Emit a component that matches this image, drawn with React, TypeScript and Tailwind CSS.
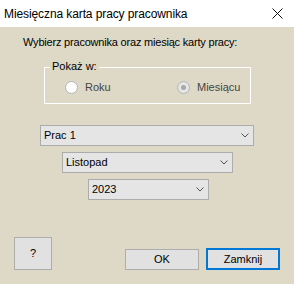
import React from "react";

const font = { fontFamily: '"Liberation Sans", Arial, sans-serif' };

function Chevron() {
  return (
    <svg width="8" height="5" viewBox="0 0 8 5" className="shrink-0">
      <path d="M0.5 0.5 L4 4 L7.5 0.5" fill="none" stroke="#555" strokeWidth="1" />
    </svg>
  );
}

function Combo({ value, width, left }: { value: string; width: string; left: string }) {
  return (
    <div
      className={`${width} ${left} flex h-[21px] items-center justify-between border border-[#acacac] bg-[#e5e5e5] pl-[3px] pr-[4px] text-[11px] text-black`}
    >
      <span className="leading-[13px]">{value}</span>
      <Chevron />
    </div>
  );
}

function Radio({ label, checked }: { label: string; checked?: boolean }) {
  return (
    <div className="flex items-center gap-[7px]">
      <div
        className={`flex h-[13px] w-[13px] items-center justify-center rounded-full border border-[#b4b4b4] ${
          checked ? "bg-[#e6e6e6]" : "bg-white"
        }`}
      >
        {checked ? <div className="h-[5px] w-[5px] rounded-full bg-[#a8a8a8]" /> : null}
      </div>
      <span className="text-[11px] leading-[13px] text-[#444]">{label}</span>
    </div>
  );
}

export default function App() {
  return (
    <div className="flex h-[284px] w-[294px] flex-col bg-[#ded9c6]" style={font}>
      {/* title bar */}
      <div className="flex h-[27px] items-center justify-between bg-white pl-[4px] pr-[11px]">
        <span className="text-[12px] leading-[14px] tracking-[-0.1px] text-black">
          Miesięczna karta pracy pracownika
        </span>
        <svg width="11" height="11" viewBox="0 0 11 11">
          <path d="M0.5 0.5 L10.5 10.5 M10.5 0.5 L0.5 10.5" stroke="#111" strokeWidth="1" />
        </svg>
      </div>

      <div className="flex flex-1 flex-col">
        <div className="mt-[9px] pl-[23px] text-[11px] leading-[13px] tracking-[-0.2px] text-black">
          Wybierz pracownika oraz miesiąc karty pracy:
        </div>

        {/* group box */}
        <div className="relative ml-[44px] mt-[18px] h-[37px] w-[207px] border border-white">
          <span className="absolute left-[5px] top-[-8px] bg-[#ded9c6] px-[2px] text-[11px] leading-[13px] text-black">
            Pokaż w:
          </span>
          <div className="flex pl-[20px] pt-[13px]">
            <div className="w-[112px]">
              <Radio label="Roku" />
            </div>
            <Radio label="Miesiącu" checked />
          </div>
        </div>

        <div className="mt-[21px] flex flex-col gap-[6px]">
          <Combo value="Prac 1" width="w-[214px]" left="ml-[40px]" />
          <Combo value="Listopad" width="w-[171px]" left="ml-[62px]" />
          <Combo value="2023" width="w-[121px]" left="ml-[88px]" />
        </div>

        {/* buttons */}
        <div className="mt-auto flex items-end px-[14px] pb-[14px]">
          <button className="h-[33px] w-[38px] border border-[#adadad] bg-[#e1e1e1] text-[11px] text-black">
            ?
          </button>
          <button className="ml-auto h-[21px] w-[74px] border border-[#adadad] bg-[#e1e1e1] text-[11px] leading-[13px] text-black">
            OK
          </button>
          <button className="ml-[7px] h-[22px] w-[74px] border-2 border-[#0078d7] bg-[#e1e1e1] text-[11px] leading-[13px] text-black">
            Zamknij
          </button>
        </div>
      </div>
    </div>
  );
}
